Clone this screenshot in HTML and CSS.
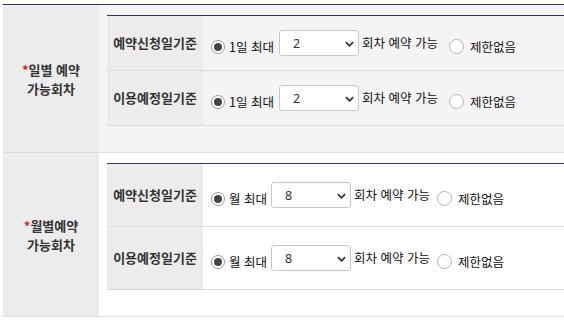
FILE: index.html
```html
<!DOCTYPE html>
<html lang="ko">
<head>
    <meta charset="UTF-8">
    <meta name="viewport" content="width=device-width, initial-scale=1.0">
    <title>예약 가능회차</title>
    <link rel="stylesheet" href="styles.css">
</head>
<body>
    <div id="wrap">
        <div class="block block-day">
            <div class="block-head"><p><span class="req">*</span>일별 예약<br>가능회차</p></div>
            <div class="block-body">
                <div class="sub">
                    <div class="sub-row">
                        <div class="sub-head">예약신청일기준</div>
                        <div class="sub-cell">
                            <label class="opt"><input type="radio" name="d1" checked> 1일 최대</label>
                            <span class="sel"><select><option>2</option></select><svg viewBox="0 0 10 6"><path d="M1 1l4 4 4-4"/></svg></span>
                            <span class="txt">회차 예약 가능</span>
                            <label class="opt opt-none"><input type="radio" name="d1"> 제한없음</label>
                        </div>
                    </div>
                    <div class="sub-row">
                        <div class="sub-head">이용예정일기준</div>
                        <div class="sub-cell">
                            <label class="opt"><input type="radio" name="d2" checked> 1일 최대</label>
                            <span class="sel"><select><option>2</option></select><svg viewBox="0 0 10 6"><path d="M1 1l4 4 4-4"/></svg></span>
                            <span class="txt">회차 예약 가능</span>
                            <label class="opt opt-none"><input type="radio" name="d2"> 제한없음</label>
                        </div>
                    </div>
                </div>
            </div>
        </div>
        <div class="block block-month">
            <div class="block-head"><p><span class="req">*</span>월별예약<br>가능회차</p></div>
            <div class="block-body">
                <div class="sub">
                    <div class="sub-row">
                        <div class="sub-head">예약신청일기준</div>
                        <div class="sub-cell">
                            <label class="opt"><input type="radio" name="m1" checked> 월 최대</label>
                            <span class="sel"><select><option>8</option></select><svg viewBox="0 0 10 6"><path d="M1 1l4 4 4-4"/></svg></span>
                            <span class="txt">회차 예약 가능</span>
                            <label class="opt opt-none"><input type="radio" name="m1"> 제한없음</label>
                        </div>
                    </div>
                    <div class="sub-row">
                        <div class="sub-head">이용예정일기준</div>
                        <div class="sub-cell">
                            <label class="opt"><input type="radio" name="m2" checked> 월 최대</label>
                            <span class="sel"><select><option>8</option></select><svg viewBox="0 0 10 6"><path d="M1 1l4 4 4-4"/></svg></span>
                            <span class="txt">회차 예약 가능</span>
                            <label class="opt opt-none"><input type="radio" name="m2"> 제한없음</label>
                        </div>
                    </div>
                </div>
            </div>
        </div>
    </div>
</body>
</html>
```

FILE: styles.css
```css
*{
    margin: 0;
    padding: 0;
    box-sizing: border-box;
}
body{
    font-family: "Noto Sans CJK KR", "Noto Sans", sans-serif;
    font-size: 12.5px;
    color: #111;
    background: #fff;
}
#wrap{
    margin: 4px 0 0 3px;
    border-top: 1px solid #2b3a6c;
}
.block{
    display: flex;
    border-bottom: 1px solid #dcdcdc;
}
.block-head{
    width: 96px;
    flex: none;
    background: #ececec;
    display: flex;
    align-items: center;
    justify-content: center;
    text-align: center;
    font-weight: bold;
    font-size: 13px;
    line-height: 19px;
    color: #333;
}
.req{
    color: #d42a2a;
}
.block-body{
    flex: 1;
    padding: 10px 0 26px 8px;
}
.block-day .block-body{
    background: #f4f4f4;
}
.sub{
    border-top: 1px solid #2b3a6c;
}
.sub-row{
    display: flex;
    height: 55px;
    border-bottom: 1px solid #dcdcdc;
}
.block-month .sub-row{
    height: 63px;
}
.sub-head{
    width: 96px;
    flex: none;
    background: #ececec;
    display: flex;
    align-items: center;
    justify-content: center;
    font-weight: bold;
    font-size: 13px;
    color: #333;
    padding-bottom: 2px;
}
.sub-cell{
    flex: 1;
    display: flex;
    align-items: center;
    padding-left: 8px;
    white-space: nowrap;
}
.opt{
    display: flex;
    align-items: center;
    margin-top: 7px;
}
.opt input{
    appearance: none;
    width: 14px;
    height: 14px;
    border: 1px solid #999;
    border-radius: 50%;
    background: #fff;
    margin-right: 4px;
    position: relative;
}
.opt input:checked::after{
    content: "";
    position: absolute;
    left: 2px;
    top: 2px;
    width: 8px;
    height: 8px;
    border-radius: 50%;
    background: #444;
}
.opt-none{
    margin-left: 11px;
}
.opt-none input{
    width: 15px;
    height: 15px;
    border-color: #b5b5b5;
    margin-right: 6px;
}
.block-month .opt-none{
    margin-left: 7px;
}
.sel{
    position: relative;
    display: inline-block;
    margin: 0 3px 0 5px;
}
.block-month .sel{
    margin-left: 4px;
}
.sel select{
    appearance: none;
    width: 80px;
    height: 26px;
    border: 1px solid #c8c8c8;
    border-radius: 3px;
    background: #fff;
    padding-left: 13px;
    font-family: "Noto Sans", sans-serif;
    font-size: 12.5px;
    color: #333;
    display: block;
}
.sel svg{
    position: absolute;
    right: 5px;
    top: 11px;
    width: 9px;
    height: 6px;
    fill: none;
    stroke: #333;
    stroke-width: 2;
    pointer-events: none;
}
.txt{
    margin-top: -1px;
}
```
